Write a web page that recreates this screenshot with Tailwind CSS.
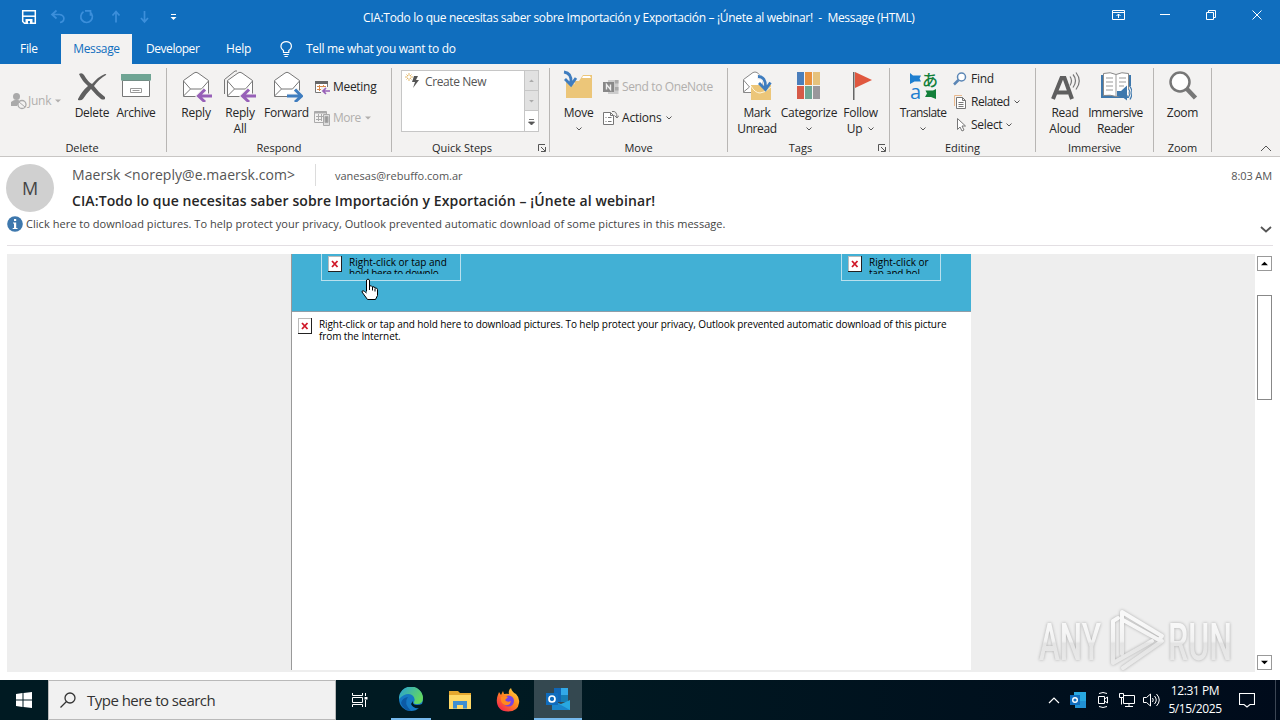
<!DOCTYPE html>
<html lang="en">

<head>
    <meta charset="UTF-8">
    <meta name="viewport" content="width=device-width, initial-scale=1.0">
    <title>Message (HTML)</title>
    <script src="https://cdn.jsdelivr.net/npm/@tailwindcss/browser@4"></script>
</head>

<body class="w-[1280px] h-[720px] overflow-hidden bg-white font-['Open_Sans','Noto_Sans',sans-serif] text-xs text-[#262626] whitespace-nowrap">
    <div class="flex flex-col h-[720px]">

        <!-- title bar -->
        <div class="flex items-center h-[34px] bg-[#106ebe] text-white">
            <div class="flex w-[363px] items-center">
                <svg viewBox="0 0 180 34" class="w-[180px] h-[34px]" fill="none" stroke="#fff" stroke-width="1.5">
                    <path d="M22.7 10.7h12.6v12.6H24.5l-1.8-1.8z" />
                    <path d="M23 16.2h12" />
                    <path d="M25.5 19h7v4.500h-7z" fill="#fff" stroke="none" />
                    <path d="M28 21h2v2.500h-2z" fill="#106ebe" stroke="none" />
                    <g stroke="#3c8fdb" stroke-width="1.7">
                        <path d="M56.500 10.500l-4.500 4 4.500 4M52.500 14.500h7c6 1 5.500 7 .5 8" />
                        <path d="M83.500 11.800a5.800 5.800 0 1 0 6.500.2M85 10.800h5.500v5" />
                        <path d="M116 22.500V12M112.500 15.500l3.500-4 3.500 4" />
                        <path d="M144.500 11v10.500M141 18l3.500 4 3.500-4" />
                    </g>
                    <path d="M171 14.500h5" stroke-width="1" />
                    <path d="M170.500 17h6l-3 3z" fill="#fff" stroke="none" />
                </svg>
            </div>
            <span class="w-[737px] tracking-[-0.32px] pt-0.5">CIA:Todo lo que necesitas saber sobre Importación y Exportación – ¡Únete al webinar!&nbsp; -&nbsp; Message (HTML)</span>
            <svg viewBox="0 0 180 34" class="w-[180px] h-[34px]" fill="none" stroke="#fff" stroke-width="1">
                <path d="M12.500 10.500h12v9h-12zM12.500 12.500h12M18.500 18v-4M16.500 16l2-2 2 2" />
                <path d="M60 14.500h10M106.500 12.500h7v7h-7zM108.500 12.500v-2h7v7h-2M152.500 10.500l9 9M161.500 10.500l-9 9" />
            </svg>
        </div>

        <!-- tabs -->
        <div class="flex items-center h-[30px] bg-[#106ebe] text-white">
            <span class="w-[61px] pl-5 tracking-[-0.3px]">File</span>
            <span class="w-[71px] h-[30px] leading-[30px] text-center bg-[#f3f2f1] text-[#106ebe] tracking-[-0.35px]">Message</span>
            <span class="w-[94px] pl-3.5 tracking-[-0.45px]">Developer</span>
            <span class="w-[52px] tracking-[-0.2px]">Help</span>
            <svg viewBox="0 0 16 20" class="w-4 h-5 mr-3" fill="none" stroke="#fff" stroke-width="1.2">
                <path d="M5.500 13.500v-2C1 8 3 2.600 8.200 2.600S15.400 8 10.800 11.500v2zM5.500 15.500h5.300M6.500 17.500h3.300" />
            </svg>
            <span class="tracking-[-0.3px]">Tell me what you want to do</span>
        </div>

        <!-- ribbon -->
        <div class="flex h-[93px] bg-[#f3f2f1] border-b border-[#c8c6c4] py-1 tracking-[-0.25px]">
            <div class="flex flex-col w-[167px] border-r border-[#b8b6b4]">
                <div class="flex h-[72px] shrink-0 pt-0.5 leading-4 text-center">
                    <div class="flex items-center w-[70px] pl-2.5 pb-2 text-[#b1afad]">
                        <svg viewBox="0 0 18 18" class="w-[18px] h-[18px]" fill="#aaa">
                            <circle cx="6.500" cy="4.500" r="3.500" />
                            <path d="M1 14V10q5-4 9-1l-3 5z" />
                            <circle cx="12" cy="12.500" r="4" fill="#f3f2f1" stroke="#aaa" stroke-width="1.300" />
                            <path d="M9 10l6 5" stroke="#aaa" />
                        </svg>
                        <span>Junk</span>
                        <svg viewBox="0 0 6 4" class="w-1.5 h-1 ml-1" fill="#b1afad"><path d="M0 .5h6l-3 3z" /></svg>
                    </div>
                    <div class="flex flex-col items-center w-11">
                        <svg viewBox="0 0 32 32" class="w-8 h-8 mb-[3px]" fill="#5f5f5f">
                            <path d="M3 4q3-2 5 1 4 7 8 9Q23 6 29 4q2 0 1 1-7 4-12 11 5 7 11 11v2q-2 1-4 0-5-4-10-10-4 4-8 10-2 2-5 1v-1q4-8 10-13Q6 11 3 4z" />
                        </svg>
                        <span>Delete</span>
                    </div>
                    <div class="flex flex-col items-center w-11">
                        <svg viewBox="0 0 32 32" class="w-8 h-8 mb-[3px]" fill="none" stroke="#777">
                            <path d="M2.500 10.500h27v16h-27z" fill="#fff" />
                            <path d="M1 4h30v6.500H1z" fill="#6fa594" stroke="none" />
                            <path d="M10.500 18.500h11v4h-11zM12.500 20.500h7" stroke="#999" />
                        </svg>
                        <span class="tracking-[-0.35px]">Archive</span>
                    </div>
                </div>
                <span class="text-[11px] leading-4 text-center pr-0.5 tracking-normal">Delete</span>
            </div>

            <div class="flex flex-col w-[225px] border-r border-[#b8b6b4]">
                <div class="flex h-[72px] shrink-0 pt-0.5 pl-[7px] leading-4 text-center">
                    <div class="flex flex-col items-center w-11">
                        <svg viewBox="0 0 32 32" class="w-8 h-8 mb-[3px]" fill="none" stroke="#777">
                            <path d="M3.500 26.500v-16L14 3q2-1.500 4 0l10.500 7.500v16z" fill="#fff" />
                            <path d="M3.500 11l7 8h11l7-8M10.500 19l-7 7" />
                            <path d="M31 26H19M25 19.500L18.500 26l6.500 6.500" stroke="#f3f2f1" stroke-width="5" />
                            <path d="M32 26H19.500M25 19.500L18.500 26l6.500 6" stroke="#9760b8" stroke-width="3" />
                        </svg>
                        <span>Reply</span>
                    </div>
                    <div class="flex flex-col items-center w-11">
                        <svg viewBox="0 0 32 32" class="w-8 h-8 mb-[3px]" fill="none" stroke="#777">
                            <path d="M.5 24V9.500L11 1h2" />
                            <path d="M3.500 26.500v-16L14 3q2-1.500 4 0l10.500 7.500v16z" fill="#fff" />
                            <path d="M3.500 11l7 8h11l7-8M10.500 19l-7 7" />
                            <path d="M31 26H19M25 19.500L18.500 26l6.500 6.500" stroke="#f3f2f1" stroke-width="5" />
                            <path d="M32 26H19.500M25 19.500L18.500 26l6.500 6" stroke="#9760b8" stroke-width="3" />
                        </svg>
                        <span>Reply<br>All</span>
                    </div>
                    <div class="flex flex-col items-center w-[49px]">
                        <svg viewBox="0 0 32 32" class="w-8 h-8 mb-[3px]" fill="none" stroke="#777">
                            <path d="M3.500 26.500v-16L14 3q2-1.500 4 0l10.500 7.500v16z" fill="#fff" />
                            <path d="M3.500 11l7 8h11l7-8M10.500 19l-7 7" />
                            <path d="M16 26h12M24 19.500l6.500 6.500-6.500 6.500" stroke="#f3f2f1" stroke-width="5" />
                            <path d="M16 26h13M24 19.500l6.500 6.500-6.500 6" stroke="#3f7dbf" stroke-width="3" />
                        </svg>
                        <span>Forward</span>
                    </div>
                    <div class="flex flex-col pl-[3px] pt-[9px] gap-[15px]">
                        <div class="flex items-center h-4">
                            <svg viewBox="0 0 16 16" class="w-4 h-4 mr-[3px]" fill="none">
                                <path d="M1.500 2.500h12v11h-12z" fill="#fff" stroke="#777" />
                                <path d="M1 2h13v3H1z" fill="#666" />
                                <path d="M3 7.500h9M3 10.500h5M5.500 6v6M9.500 6v3" stroke="#d98a4b" />
                                <path d="M7 8h9v8H7z" fill="#f3f2f1" />
                                <path d="M16 12H9M12 9l-3 3 3 3" stroke="#9760b8" stroke-width="1.700" />
                            </svg>
                            <span class="tracking-[-0.3px]">Meeting</span>
                        </div>
                        <div class="flex items-center h-4 text-[#b1afad]">
                            <svg viewBox="0 0 16 16" class="w-4 h-4 mr-[3px]" fill="none" stroke="#aaa">
                                <path d="M.5 1.500h12v11H.5zM2 6.500h8M2 9.500h6M4.500 4v7M7.500 4v7" />
                                <path d="M.5 2.500h12" stroke-width="2" />
                                <path d="M9.500 4.500h6v11h-6z" fill="#ddd" />
                                <path d="M11 6.500h3v6h-3z" fill="#999" />
                            </svg>
                            <span class="tracking-[-0.45px]">More</span>
                            <svg viewBox="0 0 6 4" class="w-1.5 h-1 ml-1" fill="#b1afad"><path d="M0 .5h6l-3 3z" /></svg>
                        </div>
                    </div>
                </div>
                <span class="text-[11px] leading-4 text-center tracking-normal">Respond</span>
            </div>

            <div class="flex flex-col w-[158px] border-r border-[#b8b6b4]">
                <div class="h-[72px] shrink-0 pt-0.5 pl-[9px]">
                    <div class="flex w-[138px] h-[62px] border border-[#c6c6c6] bg-white text-[#555]">
                        <svg viewBox="0 0 16 16" class="w-4 h-4 ml-[3px] mt-0.5" fill="none">
                            <path d="M9 3h4l-2 4h3l-6 8 2-6H7z" fill="#555" />
                            <path d="M4 0v8M0 4h8M1.500 1.500l5 5M6.500 1.500l-5 5" stroke="#e3b768" />
                            <circle cx="4" cy="4" r="1.500" fill="#fff" />
                        </svg>
                        <span class="flex-1 pl-1 leading-[22px] tracking-[-0.4px]">Create New</span>
                        <div class="flex flex-col w-3.5 border-l border-[#c6c6c6]">
                            <svg viewBox="0 0 13 20" class="h-5 bg-[#e1e1e1] border-b border-[#c6c6c6]"><path d="M4 11.500h5l-2.500-2.500z" fill="#aaa" /></svg>
                            <svg viewBox="0 0 13 20" class="h-5 bg-[#e1e1e1] border-b border-[#c6c6c6]"><path d="M4 9.500h5l-2.500 2.500z" fill="#aaa" /></svg>
                            <svg viewBox="0 0 13 20" class="h-5"><path d="M4 8.500h5M3.500 11h6l-3 3z" fill="#555" stroke="#555" stroke-width=".8" /></svg>
                        </div>
                    </div>
                </div>
                <div class="flex items-center h-4 shrink-0">
                    <span class="w-[140px] text-[11px] text-center leading-4 tracking-normal">Quick Steps</span>
                    <svg viewBox="0 0 10 10" class="w-2.5 h-2.5 ml-[5px]" fill="none" stroke="#555"><path d="M1.500 8V1.500H8M4 4l4 4M8.500 4v4.500H4" /></svg>
                </div>
            </div>

            <div class="flex flex-col w-[178px] border-r border-[#b8b6b4]">
                <div class="flex h-[72px] shrink-0 pt-0.5 pl-1.5 leading-4">
                    <div class="flex flex-col items-center w-[45px]">
                        <svg viewBox="0 0 32 32" class="w-8 h-8 mb-[3px]" fill="none">
                            <path d="M3 28V11h13l4-6h9v23z" fill="#ecc679" />
                            <path d="M19 8h9l-1-2h-7z" fill="#fff" />
                            <path d="M1 2q9 0 8 12" stroke="#f3f2f1" stroke-width="5" />
                            <path d="M1 2q8 1 7 11M2 9l6 6 5-7" stroke="#3f7dbf" stroke-width="2.800" />
                        </svg>
                        <span>Move</span>
                        <svg viewBox="0 0 6 4" class="w-1.5 h-1 mt-1.5" fill="none" stroke="#555"><path d="M.5.500L3 3 5.500.5" /></svg>
                    </div>
                    <div class="flex flex-col pl-0.5 pt-[9px] gap-[15px]">
                        <div class="flex items-center h-4 text-[#b1afad]">
                            <svg viewBox="0 0 16 16" class="w-4 h-4 mr-[3px]">
                                <path d="M5 1h10.500v14H5z" fill="#ccc" />
                                <path d="M12 1h3.500v3.500H12zM12 8h3.500v3.500H12z" fill="#aaa" />
                                <path d="M0 3h11v10H0z" fill="#888" />
                                <path d="M3.500 10.500V5.500l4 5v-5" stroke="#eee" stroke-width="1.400" fill="none" />
                            </svg>
                            <span class="tracking-[-0.38px]">Send to OneNote</span>
                        </div>
                        <div class="flex items-center h-4">
                            <svg viewBox="0 0 16 16" class="w-4 h-4 mr-[3px]" fill="none" stroke="#777">
                                <path d="M.5 2.500h7l3 3v9H.5zM7.500 2.500v3h3" fill="#fff" />
                                <path d="M2.500 7.500h1M5 7.500h3.500M2.500 11.500h1M5 11.500h3.500" />
                                <path d="M9 1.500q5-1 5 6M11.500 5.500l2.500 2.500L16 5.500" />
                            </svg>
                            <span class="tracking-[-0.2px]">Actions</span>
                            <svg viewBox="0 0 6 4" class="w-1.5 h-1 ml-1" fill="none" stroke="#555"><path d="M.5.500L3 3 5.500.5" /></svg>
                        </div>
                    </div>
                </div>
                <span class="text-[11px] leading-4 text-center tracking-normal">Move</span>
            </div>

            <div class="flex flex-col w-[162px] border-r border-[#b8b6b4]">
                <div class="flex h-[72px] shrink-0 pt-0.5 pl-[3px] leading-4 text-center">
                    <div class="flex flex-col items-center w-[52px]">
                        <svg viewBox="0 0 32 32" class="w-8 h-8 mb-[3px]" fill="none">
                            <path d="M2.500 22.500v-13L12 2.500q2-1 4 0L22 8v14.500z" fill="#fff" stroke="#888" />
                            <path d="M2.500 10l6 7-6 5" stroke="#888" />
                            <path d="M10 15h20v15H10z" fill="#ecc679" />
                            <path d="M10 16q4 7 9 7t11-6" stroke="#fff6dc" />
                            <path d="M16 7q9-1 9 11" stroke="#f3f2f1" stroke-width="5" />
                            <path d="M17 6.500q8 0 7.500 11M18 13l6.500 6.500 5-7" stroke="#3f7dbf" stroke-width="2.800" />
                        </svg>
                        <span class="tracking-[-0.4px]">Mark<br>Unread</span>
                    </div>
                    <div class="flex flex-col items-center w-[52px]">
                        <svg viewBox="0 0 32 32" class="w-8 h-8 mb-[3px]">
                            <path d="M4 2h7v13H4z" fill="#4a7ebb" />
                            <path d="M12 2h7v13h-7z" fill="#e8913f" />
                            <path d="M20 2h7v13h-7z" fill="#e6c27c" />
                            <path d="M4 16h7v13H4z" fill="#d65a48" />
                            <path d="M12 16h7v13h-7z" fill="#6fa594" />
                            <path d="M20 16h7v13h-7z" fill="#9a979b" />
                        </svg>
                        <span class="tracking-[-0.3px]">Categorize</span>
                        <svg viewBox="0 0 6 4" class="w-1.5 h-1 mt-1.5" fill="none" stroke="#555"><path d="M.5.500L3 3 5.500.5" /></svg>
                    </div>
                    <div class="flex flex-col items-center w-[51px]">
                        <svg viewBox="0 0 32 32" class="w-8 h-8 mb-[3px]">
                            <path d="M8 2h1.500v28H8z" fill="#666" />
                            <path d="M10 2l17 8-17 8z" fill="#e0583f" />
                        </svg>
                        <span>Follow</span>
                        <div class="flex items-center">
                            <span>Up</span>
                            <svg viewBox="0 0 6 4" class="w-1.5 h-1 ml-1.5" fill="none" stroke="#555"><path d="M.5.500L3 3 5.500.5" /></svg>
                        </div>
                    </div>
                </div>
                <div class="flex items-center h-4 shrink-0">
                    <span class="w-[145px] text-[11px] text-center leading-4 tracking-normal">Tags</span>
                    <svg viewBox="0 0 10 10" class="w-2.5 h-2.5 ml-1" fill="none" stroke="#555"><path d="M1.500 8V1.500H8M4 4l4 4M8.500 4v4.500H4" /></svg>
                </div>
            </div>

            <div class="flex flex-col w-[146px] border-r border-[#b8b6b4]">
                <div class="flex h-[72px] shrink-0 pt-0.5 pl-[7px] leading-4">
                    <div class="flex flex-col items-center w-[52px]">
                        <svg viewBox="0 0 32 32" class="w-8 h-8 mb-[3px] overflow-visible">
                            <path d="M3 3l3 2.500h8l-1.500 3 1.500 3H7.500L3 14z" fill="#1e7fd0" />
                            <path d="M29 29V19l-3 1.500h-7.500l1.500 3-2 3.500h6z" fill="#13803a" />
                            <text x="15" y="15.500" font-size="16" font-weight="500" fill="#13803a" font-family="Noto Sans CJK JP, sans-serif">あ</text>
                            <text x="3" y="29" font-size="20" letter-spacing="0" fill="#1e7fd0" font-family="Open Sans, sans-serif">a</text>
                        </svg>
                        <span class="tracking-[-0.6px]">Translate</span>
                        <svg viewBox="0 0 6 4" class="w-1.5 h-1 mt-1.5" fill="none" stroke="#555"><path d="M.5.500L3 3 5.500.5" /></svg>
                    </div>
                    <div class="flex flex-col pl-1 pt-px gap-[7px]">
                        <div class="flex items-center h-4">
                            <svg viewBox="0 0 16 16" class="w-4 h-4 mr-[2px]" fill="none"><circle cx="8.500" cy="6" r="4" fill="#fff" stroke="#5b86b5" stroke-width="1.500" /><path d="M5.500 9L1 13.500" stroke="#5b86b5" stroke-width="2.500" /></svg>
                            <span>Find</span>
                        </div>
                        <div class="flex items-center h-4">
                            <svg viewBox="0 0 16 16" class="w-4 h-4 mr-[2px]" fill="none" stroke="#777">
                                <path d="M1.500 12V1.500H9" stroke="#eab98d" />
                                <path d="M3.500 3.500h6l3 3v8h-9zM9.500 3.500v3h3" fill="#fff" />
                                <path d="M5.500 8.500h5M5.500 10.500h5M5.500 12.500h5" />
                            </svg>
                            <span class="tracking-[-0.5px]">Related</span>
                            <svg viewBox="0 0 6 4" class="w-1.5 h-1 ml-1" fill="none" stroke="#555"><path d="M.5.500L3 3 5.500.5" /></svg>
                        </div>
                        <div class="flex items-center h-4">
                            <svg viewBox="0 0 16 16" class="w-4 h-4 mr-[2px]" fill="none" stroke="#777"><path d="M4.500 1.500v11l2.500-2.500 2 4 2-1-2-4h3.500z" fill="#fff" /></svg>
                            <span class="tracking-[-0.3px]">Select</span>
                            <svg viewBox="0 0 6 4" class="w-1.5 h-1 ml-1" fill="none" stroke="#555"><path d="M.5.500L3 3 5.500.5" /></svg>
                        </div>
                    </div>
                </div>
                <span class="text-[11px] leading-4 text-center tracking-normal">Editing</span>
            </div>

            <div class="flex flex-col w-[118px] border-r border-[#b8b6b4]">
                <div class="flex h-[72px] shrink-0 pt-0.5 pl-[5px] leading-4 text-center">
                    <div class="flex flex-col items-center w-12">
                        <svg viewBox="0 0 32 32" class="w-8 h-8 mb-[3px]" fill="none">
                            <path d="M4 29L12.500 8h3L23 29M8 22.500h11" stroke="#5f5f5f" stroke-width="4" />
                            <path d="M21 6.500q3 4 0 9M24 4.500q5 6 0 13M27 2.500q6.500 8.500 0 17" stroke="#777" stroke-width="1.200" />
                        </svg>
                        <span>Read<br>Aloud</span>
                    </div>
                    <div class="flex flex-col items-center w-[53px]">
                        <svg viewBox="0 0 32 32" class="w-8 h-8 mb-[3px]" fill="none">
                            <path d="M1 5h30v23H1z" fill="#3e78ad" />
                            <path d="M3.500 3.500q7-2 12.500 1 5.500-3 12.500-1v22q-7-1-12.500 1-5.500-2-12.500-1z" fill="#fff" stroke="#888" />
                            <path d="M16 4.500v22M6 8h7M6 12h7M6 16h7M6 20h7M19 8h7M19 12h7M19 16h5" stroke="#999" />
                            <path d="M17 21h4l6-5.500v15L21 26h-4z" fill="#3e78ad" />
                            <path d="M28.500 19q3 4 0 8M30 16.500q4 6 0 13" stroke="#f3f2f1" stroke-width="3" />
                            <path d="M28.500 19q3 4 0 8M30 16.500q4 6 0 13" stroke="#3e78ad" stroke-width="1.200" />
                        </svg>
                        <span class="tracking-[-0.45px]">Immersive<br>Reader</span>
                    </div>
                </div>
                <span class="text-[11px] leading-4 text-center tracking-[-0.1px]">Immersive</span>
            </div>

            <div class="flex flex-col w-[58px] border-r border-[#b8b6b4]">
                <div class="flex flex-col items-center h-[72px] shrink-0 pt-0.5 leading-4">
                    <svg viewBox="0 0 32 32" class="w-8 h-8 mb-[3px]" fill="none" stroke="#777">
                        <circle cx="13" cy="12" r="9.500" fill="#fff" stroke-width="2.500" />
                        <path d="M19.500 18.500l9 9.500" stroke-width="4.500" />
                    </svg>
                    <span>Zoom</span>
                </div>
                <span class="text-[11px] leading-4 text-center tracking-[-0.1px]">Zoom</span>
            </div>
            <div class="flex flex-1 items-end justify-end pr-2">
                <svg viewBox="0 0 12 7" class="w-3 h-[7px]" fill="none" stroke="#555"><path d="M1 6l5-5 5 5" /></svg>
            </div>
        </div>

        <!-- message header -->
        <div class="flex h-[58px] pt-[7px] pl-1.5 text-[#555]">
            <div class="flex justify-center items-center w-12 h-12 mr-[18px] rounded-full bg-[#d0d0d0] text-lg text-[#444]">M</div>
            <div class="flex-1">
                <div class="flex items-center h-[22px]">
                    <span class="w-[243px] text-sm tracking-[0.05px]">Maersk &lt;noreply@e.maersk.com&gt;</span>
                    <span class="h-[22px] w-5 border-l border-[#dcdcdc]"></span>
                    <span class="text-[11px] pt-0.5">vanesas@rebuffo.com.ar</span>
                    <span class="ml-auto pr-2 pt-0.5 text-[11px] tracking-[-0.1px]">8:03 AM</span>
                </div>
                <div class="h-7 leading-[30px] text-sm font-semibold text-[#262626] tracking-[0.1px]">CIA:Todo lo que necesitas saber sobre Importación y Exportación – ¡Únete al webinar!</div>
            </div>
        </div>
        <div class="flex items-center h-[31px] mx-[7px] pb-1 border-b border-[#e3dfe3] text-[#444]">
            <svg viewBox="0 0 16 16" class="w-4 h-4 mr-[3px] mb-2"><circle cx="8" cy="8" r="7.800" fill="#3e78ad" /><path d="M6 6.500h3.200V12h1.300v1H5.700v-1H7V7.500H6zM7 3h2.200v2H7z" fill="#fff" /></svg>
            <span class="mb-2 text-[11px] tracking-[0.04px]">Click here to download pictures. To help protect your privacy, Outlook prevented automatic download of some pictures in this message.</span>
            <svg viewBox="0 0 12 7" class="w-3 h-[7px] ml-auto mr-px mt-0.5" fill="none" stroke="#555" stroke-width="1.800"><path d="M1 1l5 4.500L11 1" /></svg>
        </div>

        <!-- message body -->
        <div class="flex h-[434px] pt-2 pb-2 pl-[7px]">
            <div class="relative w-[1248px] pl-[284px] bg-[#eee] font-['Open_Sans',sans-serif] text-[10px] text-black">
                <div class="w-[680px] h-[416px] bg-white border-l border-[#999]">
                    <div class="flex justify-between h-[58px] pl-[29px] pr-[30px] bg-[#42b0d5] border-b border-[#8f9ea8]">
                        <div class="flex w-[140px] h-[27px] pl-1.5 border border-t-0 border-[#b9e0ee]">
                            <svg viewBox="0 0 14 16" class="w-3.5 h-4 mt-0.5 mr-[7px]"><path d="M0 0h14v16H0z" fill="#222" /><path d="M0 0h13v15H0z" fill="#bbb" /><path d="M1 1h12v14H1z" fill="#fff" /><path d="M4 5l5.500 6M9.500 5L4 11" stroke="#d01828" stroke-width="1.800" /></svg>
                            <div class="h-5 overflow-hidden pt-[3px] leading-[11px]">Right-click or tap and<br><span class="tracking-[-0.25px]">hold here to downlo</span></div>
                        </div>
                        <div class="flex w-[100px] h-[27px] pl-1.5 border border-t-0 border-[#b9e0ee]">
                            <svg viewBox="0 0 14 16" class="w-3.5 h-4 mt-0.5 mr-[7px]"><path d="M0 0h14v16H0z" fill="#222" /><path d="M0 0h13v15H0z" fill="#bbb" /><path d="M1 1h12v14H1z" fill="#fff" /><path d="M4 5l5.500 6M9.500 5L4 11" stroke="#d01828" stroke-width="1.800" /></svg>
                            <div class="h-5 overflow-hidden pt-[3px] leading-[11px]">Right-click or<br><span class="tracking-[-0.2px]">tap and hol</span></div>
                        </div>
                    </div>
                    <div class="flex pt-1.5 pl-1.5">
                        <svg viewBox="0 0 14 16" class="w-3.5 h-4 mr-[7px]"><path d="M0 0h14v16H0z" fill="#222" /><path d="M0 0h13v15H0z" fill="#bbb" /><path d="M1 1h12v14H1z" fill="#fff" /><path d="M4 5l5.500 6M9.500 5L4 11" stroke="#d01828" stroke-width="1.800" /></svg>
                        <p class="leading-3 tracking-[-0.095px]">Right-click or tap and hold here to download pictures. To help protect your privacy, Outlook prevented automatic download of this picture<br>from the Internet.</p>
                    </div>
                </div>
                <!-- hand cursor -->
                <svg viewBox="0 0 18 23" class="absolute left-[354px] top-6 w-[18px] h-[23px]" fill="#fff" stroke="#000">
                    <path d="M5.500 13.500V2q1.500-2 3 0v6q2-1 3 1 2-1 2.500 1 2-.5 2.500 1.500v6l-2 4H6.500L1 14q0-3 4.500 1" />
                    <path d="M8.500 8v4M11.500 9v3.500M14 10.500v3" />
                </svg>
                <!-- watermark -->
                <svg viewBox="0 0 210 70" class="absolute right-3.5 bottom-0 w-[210px] h-[70px] drop-shadow-[0_0_1.5px_#aaa]" fill="none">
                    <defs>
                        <linearGradient id="mark" gradientUnits="userSpaceOnUse" x1="0" y1="10" x2="0" y2="66"><stop offset=".2" stop-color="#f8f8f8" /><stop offset=".52" stop-color="#f2f2f2" /><stop offset=".56" stop-color="#e4e4e4" /><stop offset="1" stop-color="#ebebeb" /></linearGradient>
                    </defs>
                    <g font-family="Roboto, sans-serif" font-size="52" font-weight="500" fill="url(#mark)">
                        <text x="8" y="58" textLength="62" lengthAdjust="spacingAndGlyphs">ANY</text>
                        <text x="137" y="58" textLength="64" lengthAdjust="spacingAndGlyphs">RUN</text>
                    </g>
                    <g stroke="url(#mark)" stroke-width="4" stroke-linejoin="round" stroke-linecap="round">
                        <path d="M87 16l-5 3v42l39-22" />
                        <path d="M91 52V10l40 24-3 4-36-20" />
                        <path d="M92 66l39-27" />
                    </g>
                </svg>
            </div>
            <div class="flex flex-col items-center w-[19px] py-0.5">
                <svg viewBox="0 0 15 15" class="w-[15px] h-[15px] border border-[#999]"><path d="M3.500 9.500h8l-4-4z" fill="#000" /></svg>
                <div class="w-[15px] h-[105px] mt-6 border border-[#888] bg-white"></div>
                <svg viewBox="0 0 15 15" class="w-[15px] h-[15px] mt-auto border border-[#999]"><path d="M3.500 5.500h8l-4 4z" fill="#000" /></svg>
            </div>
        </div>

        <!-- taskbar -->
        <div class="flex h-10 bg-linear-to-r from-[#001a22] from-40% to-[#000b1b] text-white">
            <div class="flex w-12 justify-center items-center">
                <svg viewBox="0 0 16 16" class="w-4 h-4" fill="#fff"><path d="M0 2l6.500-1v6.500H0zM7.500 1L16 0v7.500H7.500zM0 8.500h6.500V15L0 14zM7.500 8.500H16V16l-8.500-1z" /></svg>
            </div>
            <div class="flex w-72 items-center pl-[11px] bg-[#f1f1f1] border border-[#b9b9b9] text-[#333]">
                <svg viewBox="0 0 16 16" class="w-4 h-4 mr-[11px]" fill="none" stroke="#333" stroke-width="1.300"><circle cx="10" cy="6" r="5" /><path d="M6.500 9.500L.5 15.500" /></svg>
                <span class="text-[15px] tracking-[-0.52px]">Type here to search</span>
            </div>
            <div class="flex w-12 justify-center items-center">
                <svg viewBox="0 0 16 16" class="w-4 h-4" fill="none" stroke="#fff"><path d="M.5 1v2.500h10V1M.5 15v-2.500h10V15M.5 5.500h10v5H.5zM13.500 1v3M13.500 8v7" /><path d="M12.500 5h3v2.500h-3z" fill="#fff" stroke="none" /></svg>
            </div>
            <div class="flex w-[54px] justify-center px-[7px]">
                <div class="flex w-10 justify-center items-center border-b-2 border-[#76b9ed]">
                    <svg viewBox="0 0 24 24" class="w-6 h-6">
                        <defs><linearGradient id="edge" x1="0" y1="0" x2="1" y2=".5"><stop offset="0" stop-color="#279fd8" /><stop offset="1" stop-color="#62d760" /></linearGradient></defs>
                        <circle cx="12" cy="12" r="12" fill="#1579c4" />
                        <path d="M0 12a12 12 0 0 1 24-1q0 6-6 6-4 0-3-2 2-4-2-7-6-3-13 4z" fill="url(#edge)" />
                        <path d="M9 10q-5 6 3 14-8-1-10-8 1-5 7-6z" fill="#0c5aa5" />
                        <path d="M14 14q-1 4 4 4 3 0 5-1l1 1-3 3q-7 1-9-4z" fill="#001a22" />
                    </svg>
                </div>
            </div>
            <div class="flex w-11 justify-center items-center">
                <svg viewBox="0 0 22 20" class="w-[22px] h-5"><path d="M0 1h9l2 2h11v16H0z" fill="#e5a82f" /><path d="M0 5h22v14H0z" fill="#ffd967" /><path d="M4 18.500V11h14v7.500h-4V15H8v3.500z" fill="#3f8fd1" /></svg>
            </div>
            <div class="flex w-[52px] justify-center items-center">
                <svg viewBox="0 0 24 24" class="w-6 h-6">
                    <defs><linearGradient id="fox" x1="1" y1="0" x2=".2" y2="1"><stop offset="0" stop-color="#ffe14a" /><stop offset=".5" stop-color="#ff8a1f" /><stop offset="1" stop-color="#f5224f" /></linearGradient></defs>
                    <path d="M12 23.500C4 23.500.5 18 .8 12 1 8 2.500 6 3 4l2 3 2-4 1 3q3-.5 5 0-1-4 2-6 1 4 5 6 4 4 3 9-1 8.500-11 8.500z" fill="url(#fox)" />
                    <circle cx="12.500" cy="13" r="5.500" fill="#7542e5" />
                    <path d="M5 9q4-2 7 0l-3 3q2 3 6 1-1 5-6 4-5-2-4-8z" fill="#ff8a1f" />
                </svg>
            </div>
            <div class="flex w-12 justify-center items-center bg-[#344850] border-b-2 border-[#76b9ed]">
                <svg viewBox="0 0 26 24" class="w-[26px] h-6"><path d="M9 1h14v14H9z" fill="#1066b5" /><path d="M16 1h7v7h-7z" fill="#32a9e7" /><path d="M16 8h7v7h-7z" fill="#167eb4" /><path d="M7 14l9 3 9-4v10H7z" fill="#28a8e0" /><path d="M7 13l18 10H7z" fill="#1a86cc" /><path d="M1 6h12v12H1z" fill="#0f6cbd" /><circle cx="7" cy="12" r="3" fill="none" stroke="#fff" stroke-width="1.700" /></svg>
            </div>
            <div class="flex flex-1 justify-end items-center">
                <svg viewBox="0 0 12 7" class="w-3 h-[7px] mr-2.5" fill="none" stroke="#fff" stroke-width="1.200"><path d="M1 6l5-5 5 5" /></svg>
                <svg viewBox="0 0 16 16" class="w-4 h-4 mr-2.5"><path d="M4 0h12v12H4z" fill="#28a8e0" /><path d="M5 9h11v7H5z" fill="#2191d4" /><path d="M0 3h10v10H0z" fill="#0f6cbd" /><circle cx="5" cy="8" r="2.300" fill="none" stroke="#fff" stroke-width="1.400" /></svg>
                <svg viewBox="0 0 14 18" class="w-3.5 h-[18px] mr-2" fill="none" stroke="#fff"><path d="M2.500 5.500h6v7h-6zM8.500 8l3-2v6l-3-2M3 2.500q4-2 8 0M3 15.500q4 2 8 0" /></svg>
                <svg viewBox="0 0 18 16" class="w-[18px] h-4 mr-1.5" fill="none" stroke="#fff"><path d="M5.500 3.500h11v8h-11zM11 11.500v3M7 14.500h8" /><path d="M1.500 1.500h4v4h-4zM3.500 5.500v7" fill="#000f1e" /></svg>
                <svg viewBox="0 0 18 16" class="w-[18px] h-4 mr-2" fill="none" stroke="#fff"><path d="M1.500 5.500h3l4-3.500v12l-4-3.500h-3zM10.500 6q1.500 2 0 4M12.500 4q3.500 4 0 8M14.500 2q5.500 6 0 12" /></svg>
                <div class="w-[54px] text-center leading-[18px] tracking-[-0.4px]">12:31 PM<br>5/15/2025</div>
                <svg viewBox="0 0 16 16" class="w-4 h-4 ml-[17px] mr-5" fill="none" stroke="#fff" stroke-width="1.100"><path d="M.5 1.500h15v11H11l-3 2.500-3-2.500H.5z" /></svg>
                <span class="h-10 w-[5px] border-l border-[#3c4654]"></span>
            </div>
        </div>
    </div>
</body>

</html>
